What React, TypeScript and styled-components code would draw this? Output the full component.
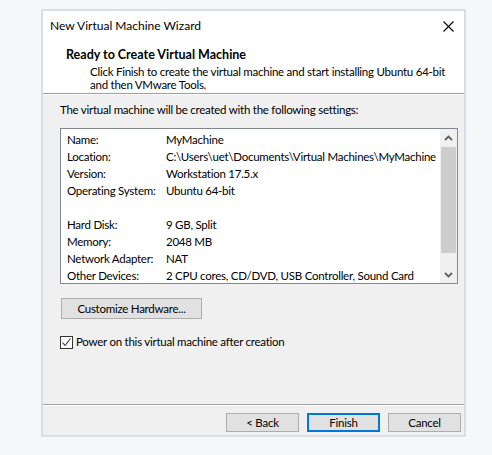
import React from "react";
import styled, { createGlobalStyle } from "styled-components";

const GlobalStyle = createGlobalStyle`
  html, body {
    margin: 0;
    padding: 0;
    background: #f6f7f9;
  }
  body {
    font-family: Lato, "Noto Sans", sans-serif;
    font-size: 11.5px;
    letter-spacing: -0.25px;
    color: #000;
  }
`;

const Page = styled.div`
  padding: 9px 0 0 41px;
`;

const Window = styled.div`
  width: 421px;
  height: 424px;
  border: 2px solid #dadde3;
  display: flex;
  flex-direction: column;
  background: #f0f0f0;
`;

const TitleBar = styled.div`
  height: 30px;
  background: #fff;
  display: flex;
  align-items: center;
  justify-content: space-between;
  padding: 0 8px 0 7px;
`;

const Title = styled.span`
  font-size: 12px;
  letter-spacing: 0;
  line-height: 16px;
`;

const CloseButton = styled.button`
  border: 0;
  background: transparent;
  width: 16px;
  height: 16px;
  padding: 0;
  display: flex;
  align-items: center;
  justify-content: center;
`;

const Header = styled.div`
  height: 53px;
  background: #fff;
  padding: 6px 0 0 23px;
  box-sizing: border-box;
  border-bottom: 1px solid #a0a0a0;
  box-shadow: 0 1px 0 #fff;
`;

const Heading = styled.div`
  font-weight: 700;
  font-size: 12.5px;
  letter-spacing: 0;
  line-height: 16px;
`;

const SubText = styled.div`
  margin: 2px 0 0 24px;
  line-height: 13px;
`;

const Body = styled.div`
  flex: 1;
  margin-top: 1px;
  padding: 7px 0 0 17px;
  display: flex;
  flex-direction: column;
  border-bottom: 1px solid #a0a0a0;
  box-shadow: 0 1px 0 #fff;
`;

const Intro = styled.div`
  line-height: 16px;
`;

const ListBox = styled.div`
  margin-top: 10px;
  width: 396px;
  height: 154px;
  border: 1px solid #828790;
  background: #fff;
  display: flex;
`;

const Rows = styled.div`
  flex: 1;
  min-width: 0;
  overflow: hidden;
  padding: 2px 0 0 6px;
`;

const Row = styled.div`
  display: grid;
  grid-template-columns: 99px 1fr;
  height: 17px;
  line-height: 17px;
  white-space: nowrap;
`;

const ScrollBar = styled.div`
  flex: 0 0 17px;
  background: #f0f0f0;
  display: flex;
  flex-direction: column;
`;

const ArrowButton = styled.div`
  height: 17px;
  display: flex;
  align-items: center;
  justify-content: center;
`;

const Track = styled.div`
  flex: 1;
  padding: 1px 1px 13px 1px;
  display: flex;
  flex-direction: column;
`;

const Thumb = styled.div`
  height: 106px;
  background: #cdcdcd;
`;

const Spacer = styled.div`
  flex: 1;
`;

const PushButton = styled.button<{ $primary?: boolean; $width: number }>`
  font-family: inherit;
  font-size: 11.5px;
  letter-spacing: -0.25px;
  color: #000;
  width: ${(p) => p.$width}px;
  height: 19px;
  padding: 0;
  background: #e1e1e1;
  border: ${(p) => (p.$primary ? "2px solid #0078d7" : "1px solid #adadad")};
  box-sizing: border-box;
  line-height: 15px;
`;

const CustomizeButton = styled(PushButton)`
  margin: 14px 0 0 1px;
  height: 21px;
`;

const CheckRow = styled.label`
  margin-top: 15px;
  display: flex;
  align-items: center;
  gap: 3px;
  line-height: 16px;
`;

const CheckBox = styled.span`
  width: 13px;
  height: 13px;
  box-sizing: border-box;
  border: 1px solid #333;
  background: #fff;
  display: flex;
  align-items: center;
  justify-content: center;
`;

const Footer = styled.div`
  height: 29px;
  margin-top: 1px;
  display: flex;
  justify-content: flex-end;
  align-items: flex-start;
  gap: 8px;
  padding: 7px 3px 0 0;
  box-sizing: border-box;
`;

const settings: [string, string][] = [
  ["Name:", "MyMachine"],
  ["Location:", "C:\\Users\\uet\\Documents\\Virtual Machines\\MyMachine"],
  ["Version:", "Workstation 17.5.x"],
  ["Operating System:", "Ubuntu 64-bit"],
  ["", ""],
  ["Hard Disk:", "9 GB, Split"],
  ["Memory:", "2048 MB"],
  ["Network Adapter:", "NAT"],
  ["Other Devices:", "2 CPU cores, CD/DVD, USB Controller, Sound Card"],
];

const Chevron = ({ up }: { up?: boolean }) => (
  <svg width="9" height="6" viewBox="0 0 9 6">
    <path
      d={up ? "M1 5 L4.5 1.5 L8 5" : "M1 1 L4.5 4.5 L8 1"}
      fill="none"
      stroke="#606060"
      strokeWidth="1.8"
    />
  </svg>
);

export default function App() {
  return (
    <>
      <GlobalStyle />
      <Page>
        <Window>
          <TitleBar>
            <Title>New Virtual Machine Wizard</Title>
            <CloseButton aria-label="Close">
              <svg width="11" height="11" viewBox="0 0 11 11">
                <path d="M0.5 0.5 L10.5 10.5 M10.5 0.5 L0.5 10.5" stroke="#000" strokeWidth="1.1" />
              </svg>
            </CloseButton>
          </TitleBar>
          <Header>
            <Heading>Ready to Create Virtual Machine</Heading>
            <SubText>
              Click Finish to create the virtual machine and start installing Ubuntu 64-bit
              <br />
              and then VMware Tools.
            </SubText>
          </Header>
          <Body>
            <Intro>The virtual machine will be created with the following settings:</Intro>
            <ListBox>
              <Rows>
                {settings.map(([k, v], i) => (
                  <Row key={i}>
                    <span>{k}</span>
                    <span>{v}</span>
                  </Row>
                ))}
              </Rows>
              <ScrollBar>
                <ArrowButton>
                  <Chevron up />
                </ArrowButton>
                <Track>
                  <Thumb />
                </Track>
                <ArrowButton>
                  <Chevron />
                </ArrowButton>
              </ScrollBar>
            </ListBox>
            <CustomizeButton $width={141}>Customize Hardware...</CustomizeButton>
            <CheckRow>
              <CheckBox>
                <svg width="11" height="11" viewBox="0 0 11 11">
                  <path d="M1.5 5.5 L4 8.5 L9.5 1.5" fill="none" stroke="#333" strokeWidth="1.1" />
                </svg>
              </CheckBox>
              Power on this virtual machine after creation
            </CheckRow>
            <Spacer />
          </Body>
          <Footer>
            <PushButton $width={73}>&lt; Back</PushButton>
            <PushButton $width={73} $primary>
              Finish
            </PushButton>
            <PushButton $width={73}>Cancel</PushButton>
          </Footer>
        </Window>
      </Page>
    </>
  );
}
